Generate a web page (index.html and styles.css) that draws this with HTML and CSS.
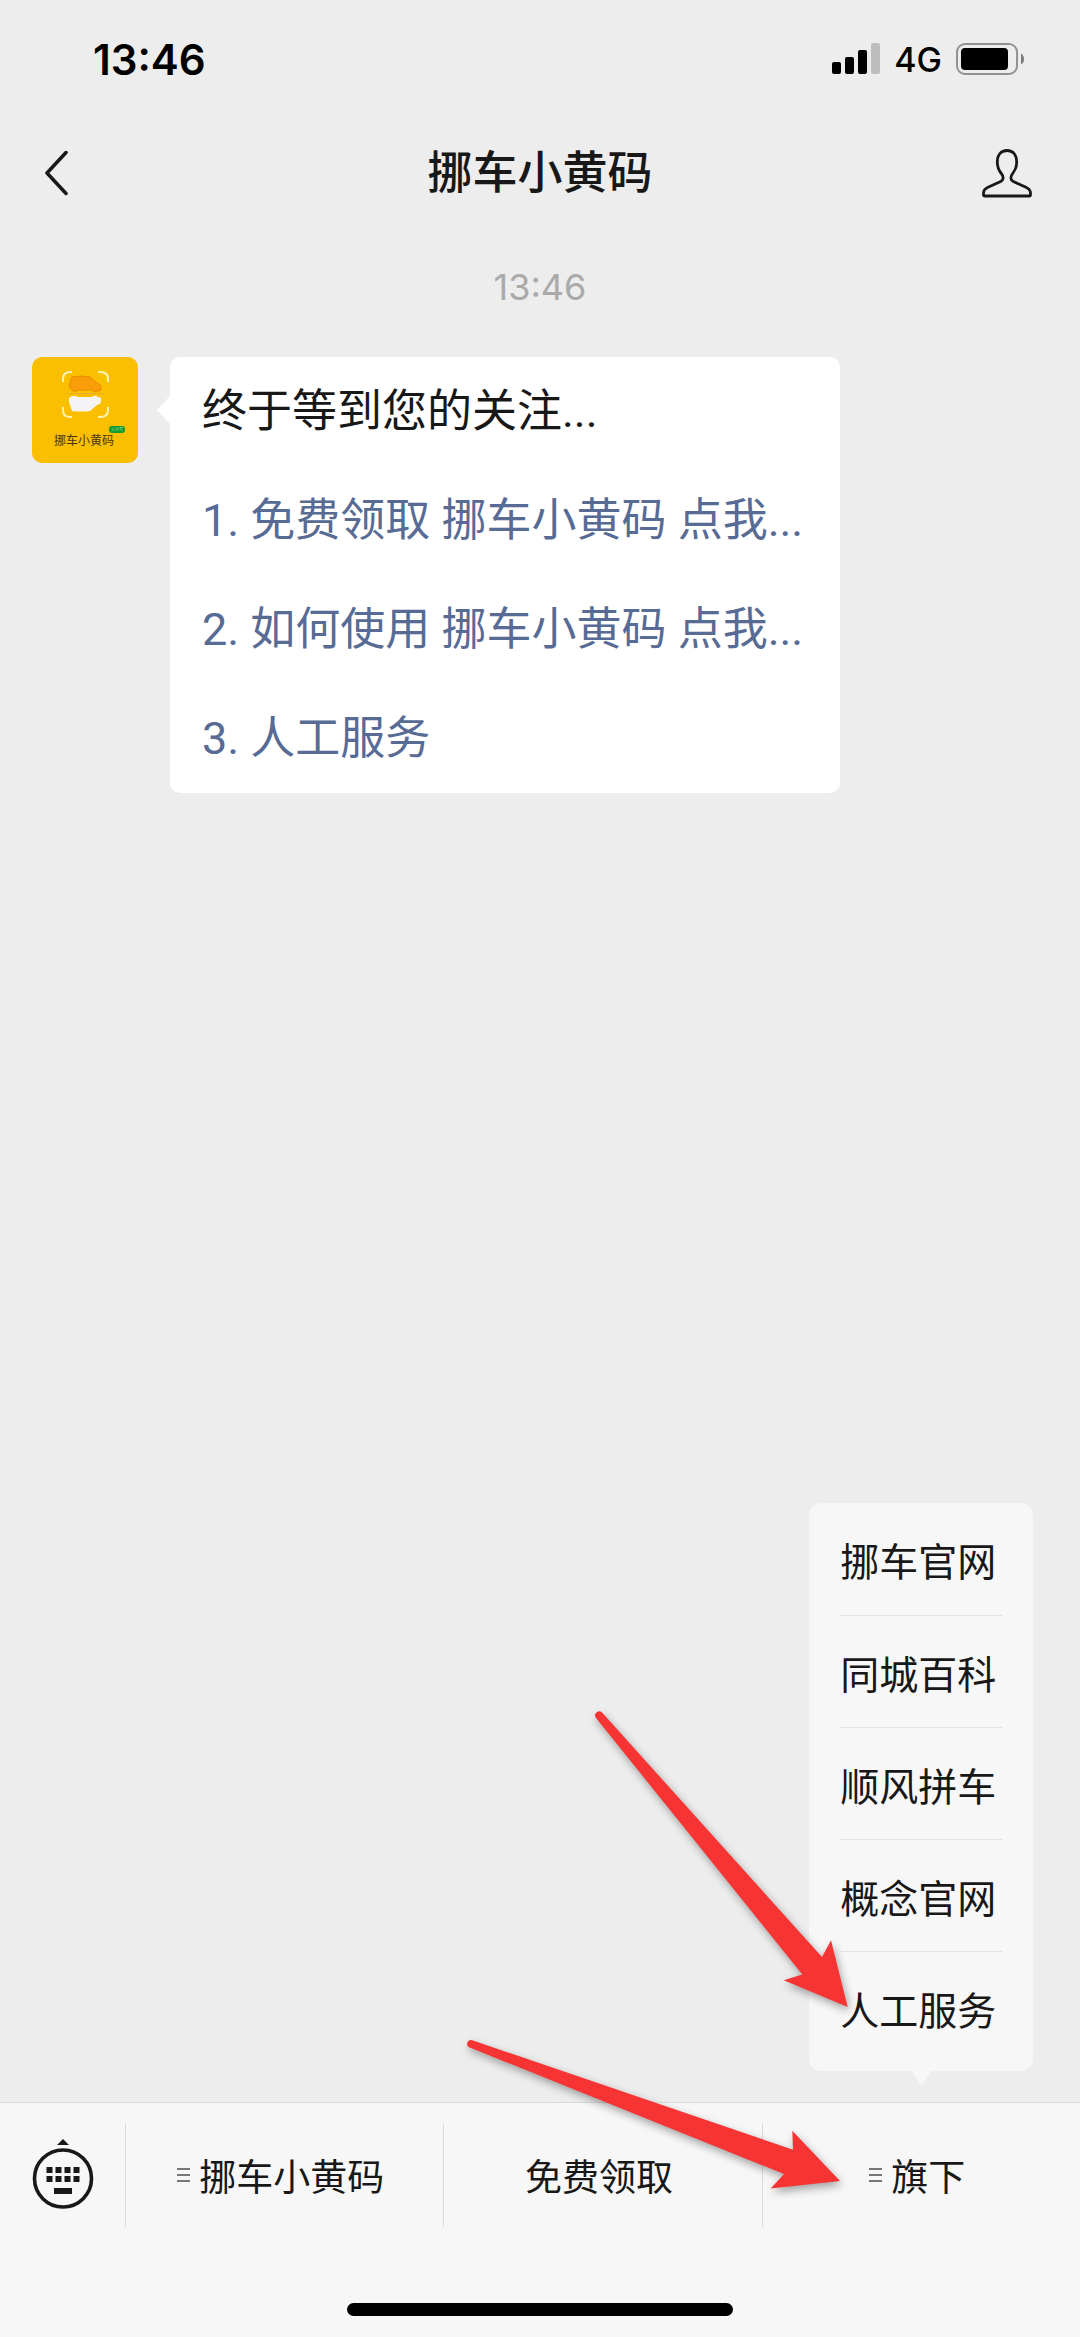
FILE: index.html
```html
<!doctype html>
<html lang="zh-CN">
<head>
    <meta charset="utf-8">
    <meta name="viewport" content="width=device-width">
    <title>挪车小黄码</title>
    <link rel="stylesheet" href="styles.css">
</head>

<body>
    <div id="app">
        <!-- status bar -->
        <div class="status">
            <span class="clock">13:46</span>
            <div class="indicators">
                <svg width="48" height="32" viewBox="0 0 48 32">
                    <rect x="0" y="19" width="9" height="12" rx="2"/>
                    <rect x="13" y="14" width="9" height="17" rx="2"/>
                    <rect x="26" y="7" width="9" height="24" rx="2"/>
                    <rect x="39" y="0" width="9" height="31" rx="2" fill="#bdbdbd"/>
                </svg>
                <span class="network">4G</span>
                <svg width="68" height="32" viewBox="0 0 68 32">
                    <rect x="1" y="1" width="60" height="30" rx="8" fill="none" stroke="#929292" stroke-width="2"/>
                    <rect x="5" y="5" width="47" height="22" rx="4"/>
                    <path d="M65 10.500q3 2 3 5.500t-3 5.500z" fill="#7c7c7c"/>
                </svg>
            </div>
        </div>

        <header>
            <button class="back" aria-label="返回">
                <svg width="26" height="46" viewBox="0 0 26 46">
                    <path d="M21 2.500L2 23l19 20.500" fill="none" stroke="#181818" stroke-width="3.500" stroke-linecap="round" stroke-linejoin="round"/>
                </svg>
            </button>
            <h1>挪车小黄码</h1>
            <button class="profile" aria-label="公众号资料">
                <svg width="54" height="50" viewBox="-1 0 54 50">
                    <path d="M25 2.500c6 0 9.700 4.600 9.700 11.500 0 5-1.600 8.500-4 11.500-2.600 3.200-2.400 6.600.6 8l12.700 5.800c3.200 1.500 4.500 3 4.500 6v1.500q0 1.200-1.200 1.200H2.700q-1.200 0-1.200-1.200v-1.500c0-3 1.300-4.500 4.500-6l12.700-5.800c3-1.400 3.200-4.800.6-8-2.400-3-4-6.500-4-11.500 0-6.900 3.700-11.500 9.700-11.500z" fill="none" stroke="#181818" stroke-width="2.800" stroke-linejoin="round"/>
                </svg>
            </button>
        </header>

        <!-- messages -->
        <main>
            <time>13:46</time>
            <div class="message">
                <svg class="avatar" width="106" height="106" viewBox="0 0 106 106">
                    <rect width="106" height="106" rx="10" fill="#f9bf00"/>
                    <path d="M31 25v-3q0-7 7-7h2M66 15h2q8 0 8 7v3M31 50v3q0 7 7 7h2M66 60h2q8 0 8-7v-3" fill="none" stroke="#fff3b4" stroke-width="2"/>
                    <path d="M38 31l-1-3 3-8q9-2 18 0l7 6q4 1 4 4v3l-3 1q-3 2-6-1H46q-3 3-6 0z" fill="#f99d08" stroke="#e98c04"/>
                    <path d="M34 36.500h38" stroke="#e9ae2c" stroke-width="1"/>
                    <path d="M37 41l3-2q3-1 6 1h14q3-3 6 0l3 1v3q0 3-4 4l-7 6q-9 1-18 0l-3-9z" fill="#f4f4f7"/>
                    <text x="22" y="88" class="logo-text">挪车小黄码</text>
                    <rect x="77" y="69" width="16" height="7" rx="3" fill="#159a31"/>
                    <text x="79" y="74" class="logo-badge">公众号</text>
                </svg>
                <div class="bubble">
                    <p>终于等到您的关注...</p>
                    <p><a href="#">1. 免费领取 挪车小黄码 点我...</a></p>
                    <p><a href="#">2. 如何使用 挪车小黄码 点我...</a></p>
                    <p><a href="#">3. 人工服务</a></p>
                </div>
            </div>
        </main>

        <!-- bottom menu -->
        <footer>
            <nav>
                <button class="keyboard" aria-label="键盘">
                    <svg width="62" height="72" viewBox="0 0 62 72">
                        <path d="M31 0l6 6H25z"/>
                        <circle cx="31" cy="39.500" r="28.500" fill="none" stroke="#181818" stroke-width="3.600"/>
                        <path d="M14.500 28h6v6h-6zM23.500 28h6v6h-6zM32.500 28h6v6h-6zM41.500 28h6v6h-6zM14.500 37h6v6h-6zM23.500 37h6v6h-6zM32.500 37h6v6h-6zM41.500 37h6v6h-6zM22 49h18v6H22z"/>
                    </svg>
                </button>
                <div class="tab"><button><i class="bars"></i>挪车小黄码</button></div>
                <div class="tab"><button>免费领取</button></div>
                <div class="tab">
                    <button><i class="bars"></i>旗下</button>
                    <ul class="submenu">
                        <li><a href="#">挪车官网</a></li>
                        <li><a href="#">同城百科</a></li>
                        <li><a href="#">顺风拼车</a></li>
                        <li><a href="#">概念官网</a></li>
                        <li><a href="#">人工服务</a></li>
                    </ul>
                </div>
            </nav>
            <div class="home"></div>
        </footer>

        <!-- arrows over the menu -->
        <svg class="arrows" width="400" height="500" viewBox="0 0 400 500">
            <path d="M136 18L342.300 274.400l-18.600 5.900 64 26.700L371 240.300 362 257 142.500 13a4 4 0 0 0-6.500 5z" class="arrow"/>
            <path d="M8.500 347L324 474l-13.300 14.600L380 481l-47.700-50.200.7 18.900L11.500 340a4 4 0 0 0-3 7z" class="arrow"/>
        </svg>
    </div>
</body>

</html>
```
FILE: styles.css
```css
* {
    box-sizing: border-box;
}

body {
    margin: 0;
    background-color: #ededed;
    color: #181818;
    font-family: Inter, "Noto Sans CJK SC", sans-serif;
}

#app {
    position: relative;
    display: flex;
    flex-direction: column;
    min-height: 100vh;
    overflow: hidden;
}

button {
    display: flex;
    align-items: center;
    justify-content: center;
    padding: 0;
    border: 0;
    background: none;
    color: inherit;
    font: inherit;
    cursor: pointer;
}

a {
    color: inherit;
    text-decoration: none;
}

svg {
    display: block;
    flex: none;
}

/* status bar */
.status {
    display: flex;
    align-items: center;
    justify-content: space-between;
    height: 118px;
    padding: 0 56px 0 93px;
    color: #000;
}

.clock {
    font-size: 42px;
    font-weight: 600;
}

.indicators {
    display: flex;
    align-items: center;
    gap: 14px;
}

.network {
    font-size: 34px;
    font-weight: 500;
}

/* title bar */
header {
    display: grid;
    grid-template-columns: 1fr auto 1fr;
    align-items: center;
    height: 110px;
    padding: 0 45px;
}

h1 {
    margin: 0;
    font-size: 45px;
    font-weight: 500;
    line-height: 60px;
}

.profile {
    justify-self: end;
}

.back {
    justify-self: start;
}

/* messages */
main {
    flex: 1;
    padding: 32px 32px 0;
}

time {
    display: block;
    color: #aaa;
    font-size: 36px;
    line-height: 54px;
    text-align: center;
}

.message {
    display: flex;
    align-items: flex-start;
    gap: 32px;
    margin-top: 43px;
}

.logo-text {
    fill: #4a3510;
    font-size: 12px;
}

.logo-badge {
    fill: #9fdc9f;
    font-size: 4px;
}

.bubble {
    position: relative;
    display: flex;
    flex-direction: column;
    gap: 54px;
    width: 670px;
    padding: 27px 32px;
    border-radius: 10px;
    background-color: #fff;
    font-family: Roboto, "Noto Sans CJK SC", sans-serif;
    font-size: 45px;
    line-height: 55px;
}

.bubble::before {
    content: "";
    position: absolute;
    left: -13px;
    top: 38px;
    width: 14px;
    height: 30px;
    background-color: #fff;
    clip-path: polygon(0 50%, 100% 0, 100% 100%);
}

.bubble p {
    margin: 0;
    white-space: nowrap;
}

.bubble a {
    color: #576b95;
}

/* bottom menu */
footer {
    height: 235px;
    border-top: 1px solid #dcdcdc;
    background-color: #f7f7f7;
}

nav {
    display: flex;
    padding-top: 20px;
}

.keyboard {
    width: 125px;
    height: 104px;
    fill: #181818;
}

.tab {
    position: relative;
    flex: 1;
    height: 104px;
    border-left: 1px solid #dcdcdc;
    font-size: 37px;
}

.tab > button {
    gap: 9px;
    width: 100%;
    height: 100%;
    padding-right: 8px;
}

.bars {
    width: 13px;
    height: 14px;
    border: solid #777;
    border-width: 2px 0;
    background: linear-gradient(#777, #777) center / 100% 2px no-repeat;
}

.submenu {
    position: absolute;
    left: 50%;
    bottom: 156px;
    width: 224px;
    margin: 0;
    padding: 0 31px 8px;
    border-radius: 12px;
    background-color: #f7f7f7;
    font-size: 39px;
    line-height: 104px;
    list-style: none;
    transform: translateX(-50%);
}

.submenu::after {
    content: "";
    position: absolute;
    left: 50%;
    top: 100%;
    width: 20px;
    height: 15px;
    margin-left: -10px;
    background-color: #f7f7f7;
    clip-path: polygon(0 0, 100% 0, 50% 100%);
}

.submenu li {
    height: 112px;
    padding-top: 7px;
    white-space: nowrap;
}

.submenu li + li {
    border-top: 1px solid #e2e2e2;
}

.home {
    width: 386px;
    height: 13px;
    margin: 76px auto 0;
    border-radius: 7px;
    background-color: #000;
}

.arrows {
    position: absolute;
    right: 220px;
    bottom: 137px;
    pointer-events: none;
    overflow: visible;
}

.arrow {
    fill: #f73434;
    filter: drop-shadow(2px 4px 4px rgba(0, 0, 0, 0.35));
}
```
